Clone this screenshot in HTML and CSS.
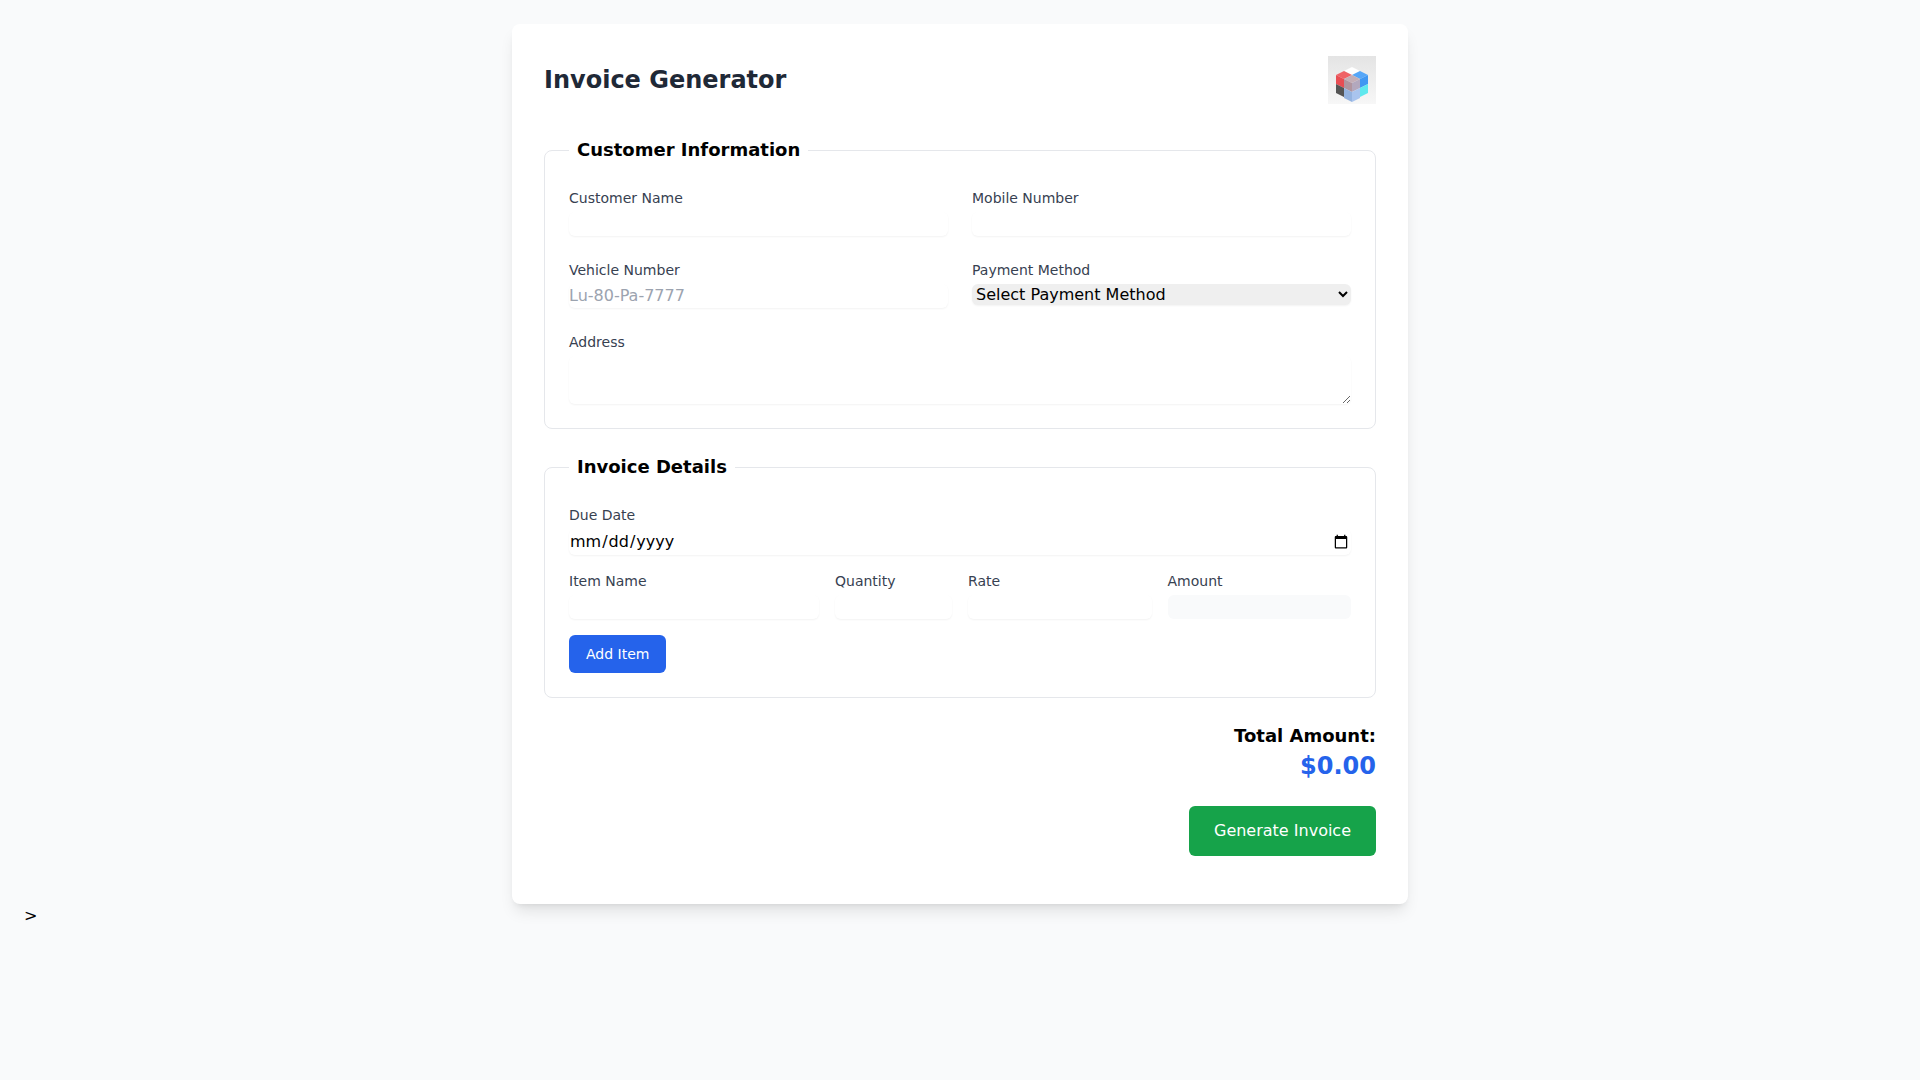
FILE: index.html
```html
<!DOCTYPE html>
<html lang="en">
<head>
    <meta charset="UTF-8">
    <meta name="viewport" content="width=device-width, initial-scale=1.0">
    <title>Invoice Generator</title>
    <link rel="stylesheet" href="styles.css">
</head>
<body>

    <div class="card">
        <div class="header">
            <h1>Invoice Generator</h1>
            <svg class="logo" viewBox="0 0 48 48" width="48" height="48">
                <defs>
                    <linearGradient id="logoBg" x1="0" y1="0" x2="0" y2="1">
                        <stop offset="0" stop-color="#e4e4e4"/>
                        <stop offset="1" stop-color="#f7f7f7"/>
                    </linearGradient>
                    <filter id="soft" x="-10%" y="-10%" width="120%" height="120%">
                        <feGaussianBlur stdDeviation="0.6"/>
                    </filter>
                </defs>
                <rect width="48" height="48" fill="url(#logoBg)"/>
                <g filter="url(#soft)" transform="translate(0 1)">
                    <!-- top faces -->
                    <polygon points="24,10 32,14 24,18 16,14" fill="#ffffff"/>
                    <polygon points="16,14 24,18 16,22 8,18" fill="#ef6266"/>
                    <polygon points="32,14 40,18 32,22 24,18" fill="#55a6f8"/>
                    <polygon points="24,18 32,22 24,26 16,22" fill="#c3aeb6"/>
                    <!-- upper row -->
                    <polygon points="8,18 16,22 16,31 8,27" fill="#e84e53"/>
                    <polygon points="16,22 24,26 24,35 16,31" fill="#b0959f"/>
                    <polygon points="24,26 32,22 32,31 24,35" fill="#b3a8bd"/>
                    <polygon points="32,22 40,18 40,27 32,31" fill="#3f97f2"/>
                    <!-- lower row -->
                    <polygon points="8,27 16,31 16,40 8,36" fill="#555555"/>
                    <polygon points="16,31 24,35 24,45 16,41" fill="#94b3e0"/>
                    <polygon points="24,35 32,31 32,41 24,45" fill="#a9c4ee"/>
                    <polygon points="32,31 40,27 40,36 32,40" fill="#5fe8ee"/>
                </g>
            </svg>
        </div>

        <fieldset class="section">
            <legend>Customer Information</legend>
            <div class="grid-two">
                <div class="field">
                    <label for="customerName">Customer Name</label>
                    <input type="text" id="customerName">
                </div>
                <div class="field">
                    <label for="mobileNumber">Mobile Number</label>
                    <input type="text" id="mobileNumber">
                </div>
                <div class="field">
                    <label for="vehicleNumber">Vehicle Number</label>
                    <input type="text" id="vehicleNumber" placeholder="Lu-80-Pa-7777">
                </div>
                <div class="field">
                    <label for="paymentMethod">Payment Method</label>
                    <select id="paymentMethod">
                        <option>Select Payment Method</option>
                        <option>Cash</option>
                        <option>Card</option>
                    </select>
                </div>
                <div class="field span-all">
                    <label for="address">Address</label>
                    <textarea id="address" rows="2"></textarea>
                </div>
            </div>
        </fieldset>

        <fieldset class="section">
            <legend>Invoice Details</legend>
            <div class="field due-date">
                <label for="dueDate">Due Date</label>
                <input type="date" id="dueDate">
            </div>
            <div class="grid-items">
                <div class="field span-4">
                    <label for="itemName">Item Name</label>
                    <input type="text" id="itemName">
                </div>
                <div class="field span-2">
                    <label for="quantity">Quantity</label>
                    <input type="text" id="quantity">
                </div>
                <div class="field span-3">
                    <label for="rate">Rate</label>
                    <input type="text" id="rate">
                </div>
                <div class="field span-3">
                    <label for="amount">Amount</label>
                    <input type="text" id="amount" class="readonly" readonly>
                </div>
            </div>
            <button class="btn-add">Add Item</button>
        </fieldset>

        <div class="total">
            <div class="total-label">Total Amount:</div>
            <div class="total-value">$0.00</div>
        </div>

        <div class="actions">
            <button class="btn-generate">Generate Invoice</button>
        </div>
    </div>
    &gt;

</body>
</html>
```

FILE: styles.css
```css
* {
    box-sizing: border-box;
}
body {
    background-color: #f9fafb;
    color: #000000;
    font-family: "DejaVu Sans", sans-serif;
    font-size: 16px;
    line-height: 24px;
    margin: 0;
    padding: 24px;
}
.card {
    background-color: #ffffff;
    width: 896px;
    margin: 0 auto;
    padding: 32px 32px 48px;
    border-radius: 8px;
    box-shadow: 0 10px 15px -3px rgba(0, 0, 0, 0.1), 0 4px 6px -4px rgba(0, 0, 0, 0.1);
}
.header {
    display: flex;
    justify-content: space-between;
    align-items: center;
    margin-bottom: 32px;
}
h1 {
    font-size: 24px;
    line-height: 32px;
    font-weight: 700;
    color: #1f2937;
    margin: 0;
}
.logo {
    display: block;
}
.section {
    border: 1px solid #e5e7eb;
    border-radius: 8px;
    margin: 0 0 24px;
    padding: 24px;
    min-width: 0;
}
legend {
    font-size: 18px;
    line-height: 28px;
    font-weight: 600;
    padding: 0 8px;
}
.grid-two {
    display: grid;
    grid-template-columns: repeat(2, 1fr);
    gap: 24px;
}
.span-all {
    grid-column: span 2;
}
.grid-items {
    display: grid;
    grid-template-columns: repeat(12, 1fr);
    gap: 16px;
}
.span-4 {
    grid-column: span 4;
}
.span-2 {
    grid-column: span 2;
}
.span-3 {
    grid-column: span 3;
}
.due-date {
    margin-bottom: 16px;
}
label {
    display: block;
    font-size: 14px;
    line-height: 20px;
    font-weight: 500;
    color: #374151;
}
input,
select,
textarea {
    display: block;
    width: 100%;
    margin: 4px 0 0;
    padding: 0;
    border: none;
    border-radius: 6px;
    font-family: inherit;
    font-size: 16px;
    line-height: 24px;
    background-color: #ffffff;
    box-shadow: 0 1px 2px 0 rgba(0, 0, 0, 0.05);
}
input::placeholder {
    color: #9ca3af;
}
select {
    background-color: #efefef;
    color: #000000;
}
.readonly {
    background-color: #f9fafb;
    box-shadow: none;
}
button {
    border: 1px solid transparent;
    border-radius: 6px;
    color: #ffffff;
    font-family: inherit;
    cursor: pointer;
}
.btn-add {
    display: block;
    margin-top: 16px;
    padding: 8px 16px;
    background-color: #2563eb;
    font-size: 14px;
    line-height: 20px;
}
.total {
    text-align: right;
}
.total-label {
    font-size: 18px;
    line-height: 28px;
    font-weight: 600;
}
.total-value {
    font-size: 24px;
    line-height: 32px;
    font-weight: 700;
    color: #2563eb;
}
.actions {
    display: flex;
    justify-content: flex-end;
    margin-top: 24px;
}
.btn-generate {
    padding: 12px 24px;
    background-color: #16a34a;
    font-size: 16px;
    line-height: 24px;
}
```
